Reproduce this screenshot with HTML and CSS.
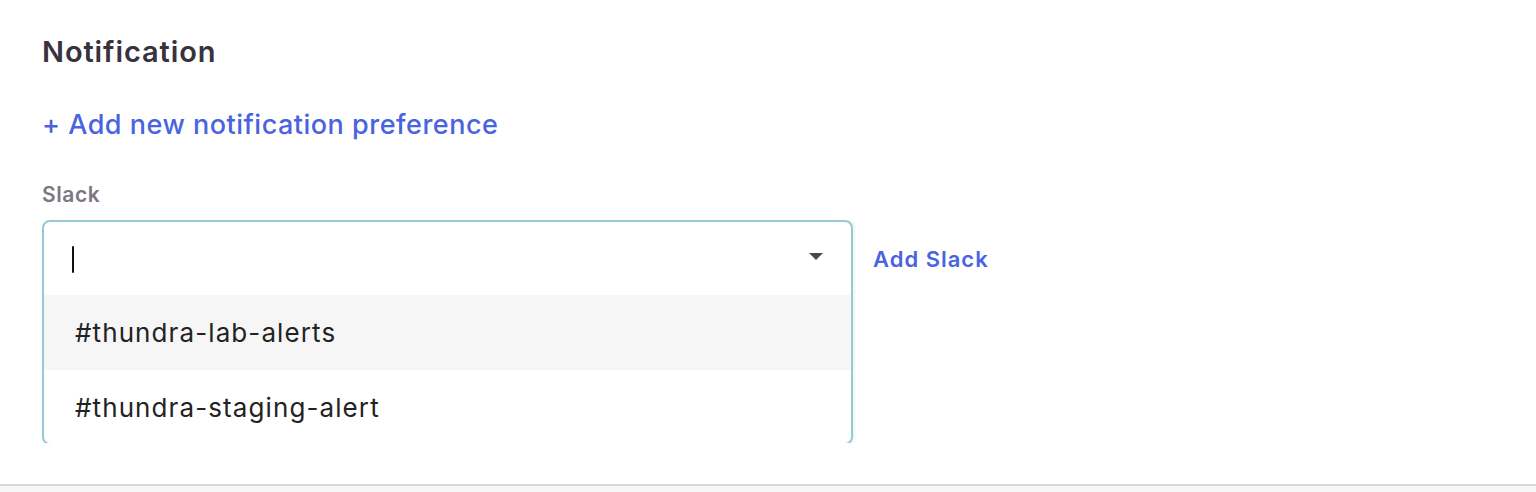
FILE: index.html
```html
<!DOCTYPE html>
<html>
<head>
<meta charset="utf-8">
<link rel="stylesheet" href="styles.css">
</head>
<body>
<div class="page">
  <section class="panel">
    <h2 class="title">Notification</h2>
    <a class="add-pref">+ Add new notification preference</a>
    <div class="field">
      <div class="label">Slack</div>
      <div class="row">
        <div class="select-clip">
          <div class="select">
            <div class="control">
              <span class="caret"></span>
              <span class="arrow"></span>
            </div>
            <div class="option active">#thundra-lab-alerts</div>
            <div class="option">#thundra-staging-alert</div>
          </div>
        </div>
        <a class="add-slack">Add Slack</a>
      </div>
    </div>
  </section>
  <div class="footer"></div>
</div>
</body>
</html>
```

FILE: styles.css
```css
html, body {
  margin: 0;
  padding: 0;
  background: #ffffff;
  font-family: Inter, "Noto Sans", sans-serif;
}
.page {
  width: 1536px;
  height: 492px;
  display: flex;
  flex-direction: column;
  overflow: hidden;
}
.panel {
  flex: 1;
  padding: 33px 0 0 42px;
  display: flex;
  flex-direction: column;
  overflow: hidden;
}
.title {
  margin: 0;
  font-size: 29px;
  line-height: 38px;
  font-weight: 600;
  letter-spacing: 0.9px;
  color: #38323f;
}
.add-pref {
  margin-top: 35px;
  font-size: 27px;
  line-height: 38px;
  font-weight: 500;
  letter-spacing: 0.5px;
  color: #4a63e1;
}
.field {
  margin-top: 38px;
}
.label {
  font-size: 21px;
  line-height: 26px;
  font-weight: 600;
  letter-spacing: 0.6px;
  color: #7c7782;
}
.row {
  margin-top: 12px;
  display: flex;
  align-items: flex-start;
}
.select-clip {
  width: 814px;
  height: 223px;
  overflow: hidden;
}
.select {
  box-sizing: border-box;
  width: 811px;
  height: 225px;
  border: 2px solid #95c9da;
  border-radius: 8px;
  background: #fff;
  box-shadow: 2px 0 3px rgba(0,0,0,0.06);
  overflow: hidden;
}
.control {
  height: 73px;
  display: flex;
  align-items: center;
  justify-content: space-between;
  padding: 0 28px 0 28px;
}
.caret {
  width: 2px;
  height: 27px;
  background: #111;
  border-radius: 1px;
  margin-top: 2px;
}
.arrow {
  width: 0;
  height: 0;
  border-left: 7px solid transparent;
  border-right: 7px solid transparent;
  border-top: 7px solid #4a4a4a;
  margin-bottom: 4px;
}
.option {
  height: 75px;
  display: flex;
  align-items: center;
  padding-left: 31px;
  font-size: 26px;
  letter-spacing: 1.1px;
  color: #232323;
}
.option.active {
  background: #f6f6f6;
}
.add-slack {
  margin-left: 17px;
  margin-top: 22px;
  font-size: 22px;
  line-height: 34px;
  font-weight: 600;
  letter-spacing: 1px;
  color: #4a63e1;
}
.footer {
  height: 6px;
  border-top: 2px solid #dadada;
  background: #f6f7f9;
}
```
